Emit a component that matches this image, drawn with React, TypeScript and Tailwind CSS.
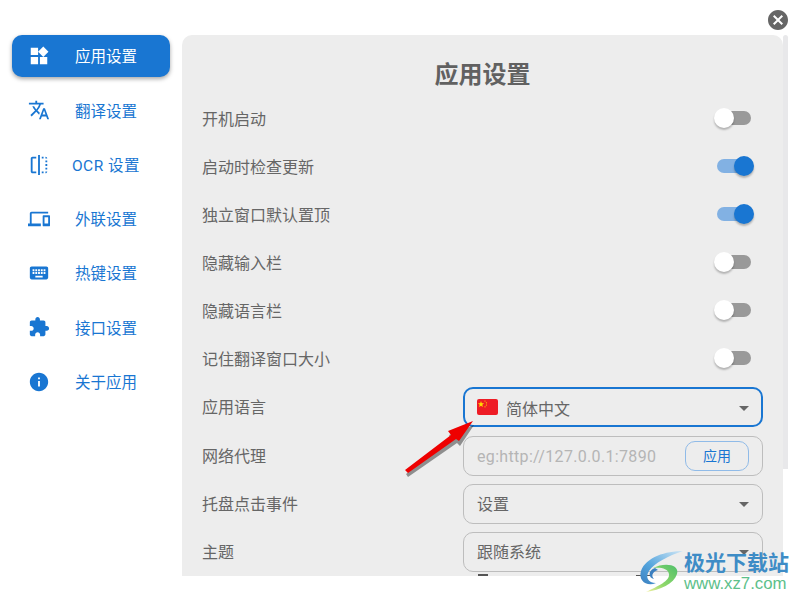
import type { ReactNode } from "react";

const FONT = "font-['Roboto','Noto_Sans_CJK_SC',sans-serif]";

/* Material icon paths */
const NAV = [
  { label: "应用设置", d: "M13 13v8h8v-8h-8zM3 21h8v-8H3v8zM3 3v8h8V3H3zm13.66-1.31L11 7.34 16.66 13l5.66-5.66-5.66-5.65z" },
  { label: "翻译设置", d: "M12.87 15.07l-2.54-2.51.03-.03c1.74-1.94 2.98-4.17 3.71-6.53H17V4h-7V2H8v2H1v1.99h11.17C11.5 7.92 10.44 9.75 9 11.35 8.07 10.32 7.3 9.19 6.69 8h-2c.73 1.63 1.73 3.17 2.98 4.56l-5.09 5.02L4 19l5-5 3.11 3.11.76-2.04zM18.5 10h-2L12 22h2l1.12-3h4.75L21 22h2l-4.5-12zm-2.62 7l1.62-4.33L19.12 17h-3.24z" },
  { label: "OCR 设置", d: "M15 21h2v-2h-2v2zm4-12h2V7h-2v2zM3 5v14c0 1.1.9 2 2 2h4v-2H5V5h4V3H5c-1.1 0-2 .9-2 2zm16-2v2h2c0-1.1-.9-2-2-2zm-8 20h2V1h-2v22zm8-6h2v-2h-2v2zM15 5h2V3h-2v2zm4 8h2v-2h-2v2zm0 8c1.1 0 2-.9 2-2h-2v2z", wide: true },
  { label: "外联设置", d: "M4 6h18V4H4c-1.1 0-2 .9-2 2v11H0v3h14v-3H4V6zm19 2h-6c-.55 0-1 .45-1 1v10c0 .55.45 1 1 1h6c.55 0 1-.45 1-1V9c0-.55-.45-1-1-1zm-1 9h-4v-7h4v7z" },
  { label: "热键设置", d: "M20 5H4c-1.1 0-1.99.9-1.99 2L2 17c0 1.1.9 2 2 2h16c1.1 0 2-.9 2-2V7c0-1.1-.9-2-2-2zm-9 3h2v2h-2V8zm0 3h2v2h-2v-2zM8 8h2v2H8V8zm0 3h2v2H8v-2zm-1 2H5v-2h2v2zm0-3H5V8h2v2zm9 7H8v-2h8v2zm0-4h-2v-2h2v2zm0-3h-2V8h2v2zm3 3h-2v-2h2v2zm0-3h-2V8h2v2z" },
  { label: "接口设置", d: "M20.5 11H19V7c0-1.1-.9-2-2-2h-4V3.5C13 2.12 11.88 1 10.5 1S8 2.12 8 3.5V5H4c-1.1 0-1.99.9-1.99 2v3.8H3.5c1.49 0 2.7 1.21 2.7 2.7s-1.21 2.7-2.7 2.7H2V20c0 1.1.9 2 2 2h3.8v-1.5c0-1.49 1.21-2.7 2.7-2.7 1.49 0 2.7 1.21 2.7 2.7V22H17c1.1 0 2-.9 2-2v-4h1.5c1.38 0 2.5-1.12 2.5-2.5S21.88 11 20.5 11z" },
  { label: "关于应用", d: "M12 2C6.48 2 2 6.48 2 12s4.48 10 10 10 10-4.48 10-10S17.52 2 12 2zm1 15h-2v-6h2v6zm0-8h-2V7h2v2z" },
];

const SWITCHES = [
  { label: "开机启动", on: false },
  { label: "启动时检查更新", on: true },
  { label: "独立窗口默认置顶", on: true },
  { label: "隐藏输入栏", on: false },
  { label: "隐藏语言栏", on: false },
  { label: "记住翻译窗口大小", on: false },
];

function Row({ label, children }: { label: string; children: ReactNode }) {
  return (
    <div className="flex h-10 items-center justify-between">
      <span className="pt-[2px] text-[16px] text-[#666]">{label}</span>
      {children}
    </div>
  );
}

function Switch({ on }: { on: boolean }) {
  return (
    <div className="relative mr-[9px] mb-[2px] h-5 w-10">
      <div className={`absolute top-[3px] left-[3px] h-[14px] w-[34px] rounded-full ${on ? "bg-[#82b1e3]" : "bg-[#999]"}`} />
      <div
        className={`absolute top-0 h-5 w-5 rounded-full shadow-[0_2px_2px_rgba(0,0,0,0.25)] ${
          on ? "left-5 bg-[#1976d2]" : "left-0 bg-white"
        }`}
      />
    </div>
  );
}

function Select({ active, children }: { active?: boolean; children: ReactNode }) {
  return (
    <div
      className={`relative flex h-10 w-[300px] items-center gap-2 rounded-[10px] text-[16px] text-[#666] ${
        active ? "border-2 border-[#1976d2] pl-3" : "border border-[#bdbdbd] pl-[13px]"
      }`}
    >
      {children}
      <svg
        width="24"
        height="24"
        viewBox="0 0 24 24"
        className={`absolute top-[7px] fill-[#666] ${active ? "right-[5px]" : "right-[6px]"}`}
      >
        <path d="M7 10l5 5 5-5z" />
      </svg>
    </div>
  );
}

function Flag() {
  return (
    <svg width="21" height="16" viewBox="0 0 21 16" className="rounded-[2px]">
      <rect width="21" height="16" fill="#ee1c25" />
      <path d="M4 2l.8 2.2 2.3.1-1.8 1.4.6 2.2L4 6.7 2.1 7.9l.6-2.2L.9 4.3l2.3-.1z" fill="#ffe000" />
      <circle cx="8" cy="2" r=".6" fill="#ffe000" />
      <circle cx="9.4" cy="3.8" r=".6" fill="#ffe000" />
      <circle cx="9.4" cy="6" r=".6" fill="#ffe000" />
      <circle cx="8" cy="7.8" r=".6" fill="#ffe000" />
    </svg>
  );
}

function Arrow() {
  return (
    <svg width="90" height="70" viewBox="0 0 90 70" className="absolute top-[415px] left-[400px]">
      <path d="M6 57 L51 22 L49 18 L74 8 L60 29 L57 26 L8 60 Z" fill="#000" opacity="0.4" transform="translate(0 2)" />
      <path d="M5 55 L51 20 L48 16 L73 6 L59 26 L56 24 L8 58 Z" fill="#ee0000" />
    </svg>
  );
}

function Watermark() {
  return (
    <div className="absolute top-[550px] left-[638px] flex items-start whitespace-nowrap">
      <svg width="46" height="46" viewBox="0 0 46 46">
        <defs>
          <linearGradient id="wmBlue" x1="1" y1="0" x2="0" y2="1">
            <stop offset="0" stopColor="#cfe6f5" />
            <stop offset="0.6" stopColor="#55a5dd" />
            <stop offset="1" stopColor="#3a7fc0" />
          </linearGradient>
          <linearGradient id="wmGreen" x1="1" y1="0" x2="0" y2="1">
            <stop offset="0" stopColor="#4fbf6a" />
            <stop offset="0.6" stopColor="#8fd86a" />
            <stop offset="1" stopColor="#f5f0a0" />
          </linearGradient>
        </defs>
        <path d="M45 1 C28 1 8 7 3 21 C0 31 9 37 18 33 C10 33 7 27 11 21 C16 13 30 6 45 1 Z" fill="url(#wmBlue)" />
        <path d="M17 18 C10 20 10 28 16 29 C13 26 14 22 20 20 Z" fill="#3a7fc0" />
        <path d="M15 18 C26 12 42 14 39 24 C36 34 22 40 8 42 C20 36 32 31 31 24 C30 18 22 17 15 18 Z" fill="url(#wmGreen)" />
      </svg>
      <div className="flex flex-col">
        <span className="mt-[1px] text-[21px] leading-[24px] font-bold text-[#3e8cc6]">极光下载站</span>
        <span className="font-['Liberation_Sans',sans-serif] text-[16.8px] leading-[18px] text-[#5cc08a]">www.xz7.com</span>
      </div>
    </div>
  );
}

export default function App() {
  return (
    <div className={`relative flex h-[600px] w-[800px] overflow-hidden bg-white ${FONT}`}>
      {/* 侧边栏 */}
      <nav className="flex w-[182px] shrink-0 flex-col gap-[12.28px] pt-[35px] pl-3">
        {NAV.map((item, i) => (
          <div
            key={item.label}
            className={`flex h-[42px] w-[158px] items-center rounded-[10px] pr-2 pl-4 text-[15.5px] ${
              i === 0 ? "bg-[#1976d2] text-white shadow-[0_2px_4px_rgba(0,0,0,0.35)]" : "text-[#1976d2]"
            }`}
          >
            <svg width="22" height="22" viewBox="0 0 24 24" className="shrink-0 fill-current">
              <path d={item.d} />
            </svg>
            <span className={`flex-1 pt-1 text-center ${item.wide ? "tracking-[0.5px]" : ""}`}>{item.label}</span>
          </div>
        ))}
      </nav>

      {/* 内容面板 */}
      <main className="relative mt-[35px] h-[541px] w-[601px] shrink-0 overflow-hidden rounded-tl-[10px] rounded-tr-[10px] bg-[#ededed] px-5 pt-4">
        <h1 className="text-center text-[24px] leading-[48px] font-bold text-[#616161]">应用设置</h1>
        <div className="flex flex-col gap-2">
          {SWITCHES.map((s) => (
            <Row key={s.label} label={s.label}>
              <Switch on={s.on} />
            </Row>
          ))}
          <Row label="应用语言">
            <Select active>
              <Flag />
              <span className="pt-[5px]">简体中文</span>
            </Select>
          </Row>
        </div>
        <div className="mt-[9px] flex flex-col gap-2">
          <Row label="网络代理">
            <div className="flex h-10 w-[300px] items-center justify-between rounded-[10px] border border-[#bdbdbd] px-[13px] text-[16px] text-[#b5b5b5]">
              <span className="pt-[2px] tracking-[0.33px]">eg:http://127.0.0.1:7890</span>
              <button className="h-[30px] w-[64px] rounded-[10px] border border-[#90bbe8] text-[14px] text-[#1976d2]">应用</button>
            </div>
          </Row>
          <Row label="托盘点击事件">
            <Select>
              <span className="pt-[2px]">设置</span>
            </Select>
          </Row>
          <Row label="主题">
            <Select>
              <span className="pt-[2px]">跟随系统</span>
            </Select>
          </Row>
        </div>
        <div className="absolute bottom-0 left-[296px] h-[2px] w-[10px] bg-[#555]" />
        <div className="absolute bottom-0 left-[454px] h-[1px] w-[14px] bg-[#555]" />
      </main>

      {/* 滚动条 */}
      <div className="mt-[35px] h-[434px] w-[5px] shrink-0 rounded-t-[3px] bg-[#e8e8ea]" />

      {/* 关闭按钮 */}
      <svg width="24" height="24" viewBox="0 0 24 24" className="absolute top-2 left-[766px] fill-[#666]">
        <path d="M12 2C6.47 2 2 6.47 2 12s4.47 10 10 10 10-4.47 10-10S17.53 2 12 2zm5 13.59L15.59 17 12 13.41 8.41 17 7 15.59 10.59 12 7 8.41 8.41 7 12 10.59 15.59 7 17 8.41 13.41 12 17 15.59z" />
      </svg>

      <Arrow />
      <Watermark />
    </div>
  );
}
